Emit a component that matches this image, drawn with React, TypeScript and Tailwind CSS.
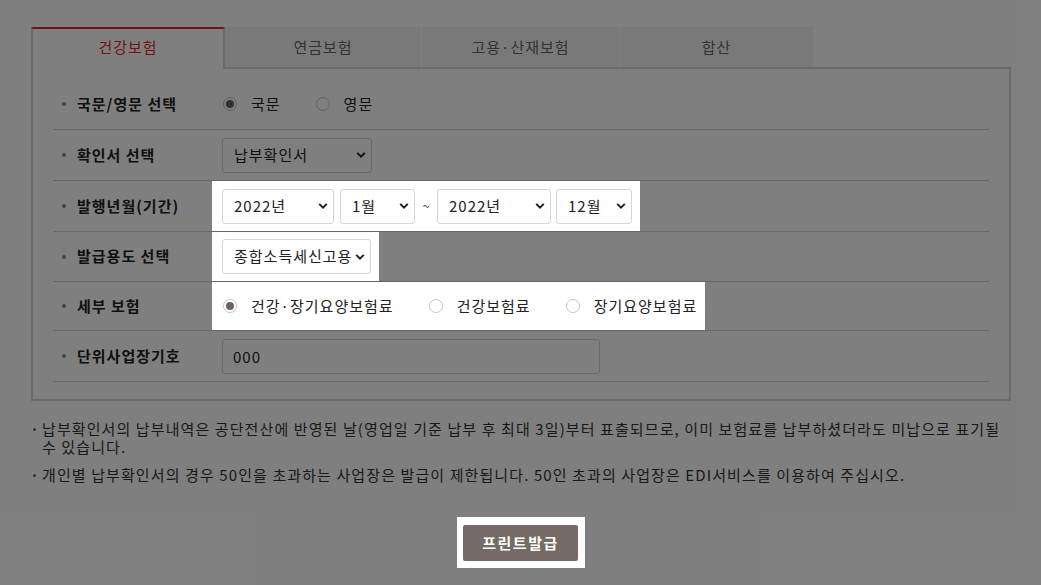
import React from 'react';

const FONT = "font-['Noto_Sans_CJK_KR','Noto_Sans',sans-serif]";

function Chevron() {
  return (
    <svg width="10" height="7" viewBox="0 0 10 7" className="pointer-events-none absolute right-[6px] top-1/2 -translate-y-1/2">
      <path d="M1.2 1.4 5 5.2 8.8 1.4" fill="none" stroke="#222" strokeWidth="2" />
    </svg>
  );
}

function Select({ value, w, pr = 'pr-[22px]' }: { value: string; w: string; pr?: string }) {
  return (
    <span className={`relative inline-block ${w}`}>
      <select
        defaultValue={value}
        className={`h-[35px] w-full appearance-none rounded-[3px] border border-[#d5d5d5] bg-white pl-[11px] ${pr} text-[15px] tracking-[1px] text-[#222] outline-none`}
      >
        <option value={value}>{value}</option>
      </select>
      <Chevron />
    </span>
  );
}

function Radio({ label, checked, gap = 'mr-[34px]' }: { label: string; checked?: boolean; gap?: string }) {
  return (
    <label className={`flex items-center ${gap}`}>
      <span className="ml-[1px] flex h-[14px] w-[14px] items-center justify-center rounded-full border border-[#c4c4c4] bg-white">
        {checked && <span className="h-[8px] w-[8px] rounded-full bg-[#6e625e]" />}
      </span>
      <span className="ml-[14px] text-[15px] text-[#222]">{label}</span>
    </label>
  );
}

function Row({ label, h, hi, children }: { label: string; h: string; hi?: boolean; children: React.ReactNode }) {
  return (
    <div className={`flex items-center border-b border-[#cfcfcf] ${h}`}>
      <div className="flex w-[159px] items-center pl-[9px] text-[15px] font-bold text-[#222]">
        <span className="mr-[11px] h-[4px] w-[4px] rounded-full bg-[#888]" />
        {label}
      </div>
      <div className="flex h-full items-center">
        <div className={`flex h-full items-center pl-[10px] pr-[8px] ${hi ? 'relative z-20 bg-white' : ''}`}>{children}</div>
      </div>
    </div>
  );
}

export default function App() {
  const tabs = [
    { name: '연금보험', w: 'w-[196px]', sep: '' },
    { name: '고용·산재보험', w: 'w-[198px]', sep: 'border-l border-l-white' },
    { name: '합산', w: 'w-[194px]', sep: 'border-l border-l-white' },
  ];

  return (
    <div className={`relative min-h-[585px] overflow-hidden bg-white tracking-[1px] ${FONT}`}>
      <div className="pointer-events-none absolute inset-0 z-10 bg-black/50" />

      <div className="ml-[31px] w-[980px] pt-[27px]">
        {/* tabs */}
        <div className="flex h-[42px]">
          <div className="flex w-[194px] items-center justify-center border-x-2 border-t-2 border-x-[#d5d5d5] border-t-[#e3262d] bg-white pb-[4px] text-[15px] text-[#e3262d]">
            건강보험
          </div>
          {tabs.map((t) => (
            <div
              key={t.name}
              className={`flex ${t.w} items-center justify-center border-b-2 border-b-[#d5d5d5] bg-[#f3f3f3] text-[15px] text-[#666] ${t.sep}`}
            >
              {t.name}
            </div>
          ))}
          <div className="flex-1 border-b-2 border-b-[#d5d5d5]" />
        </div>

        {/* form panel */}
        <div className="border-2 border-t-0 border-[#d5d5d5] px-[20px] pb-[17px] pt-[10px]">
          <Row label="국문/영문 선택" h="h-[51px]">
            <Radio label="국문" checked />
            <Radio label="영문" />
          </Row>
          <Row label="확인서 선택" h="h-[51px]">
            <Select value="납부확인서" w="w-[150px]" />
          </Row>
          <Row label="발행년월(기간)" h="h-[51px]" hi>
            <Select value="2022년" w="w-[112px]" />
            <span className="ml-[6px]" />
            <Select value="1월" w="w-[75px]" />
            <span className="w-[22px] text-center text-[13px] tracking-normal text-[#555]">~</span>
            <Select value="2022년" w="w-[114px]" />
            <span className="ml-[5px]" />
            <Select value="12월" w="w-[76px]" />
          </Row>
          <Row label="발급용도 선택" h="h-[50px]" hi>
            <Select value="종합소득세신고용" w="w-[149px]" pr="pr-[12px]" />
          </Row>
          <Row label="세부 보험" h="h-[49px]" hi>
            <Radio label="건강·장기요양보험료" checked />
            <Radio label="건강보험료" />
            <Radio label="장기요양보험료" gap="" />
          </Row>
          <Row label="단위사업장기호" h="h-[51px]">
            <input
              readOnly
              value="000"
              className="h-[35px] w-[378px] rounded-[3px] border border-[#d5d5d5] bg-white pl-[10px] text-[15px] text-[#222] outline-none"
            />
          </Row>
        </div>

        {/* notes */}
        <ul className="mt-[19px] text-[15px] leading-[18px] tracking-[1.1px] text-[#333]">
          <li className="flex">
            <span className="w-[11px] shrink-0">
              <span className="ml-[2px] mt-[8px] block h-[3px] w-[3px] rounded-full bg-[#666]" />
            </span>
            <span>
              납부확인서의 납부내역은 공단전산에 반영된 날(영업일 기준 납부 후 최대 3일)부터 표출되므로, 이미 보험료를 납부하셨더라도 미납으로 표기될
              <br />수 있습니다.
            </span>
          </li>
          <li className="mt-[10px] flex">
            <span className="w-[11px] shrink-0">
              <span className="ml-[2px] mt-[8px] block h-[3px] w-[3px] rounded-full bg-[#666]" />
            </span>
            <span>개인별 납부확인서의 경우 50인을 초과하는 사업장은 발급이 제한됩니다. 50인 초과의 사업장은 EDI서비스를 이용하여 주십시오.</span>
          </li>
        </ul>

        {/* action */}
        <div className="mt-[33px] flex justify-center">
          <div className="relative z-20 bg-white pb-[7px] pl-[6px] pr-[7px] pt-[8px]">
            <button className="h-[36px] w-[115px] rounded-[2px] bg-[#756a66] text-[15px] font-bold tracking-[1.5px] text-white">프린트발급</button>
          </div>
        </div>
      </div>
    </div>
  );
}
